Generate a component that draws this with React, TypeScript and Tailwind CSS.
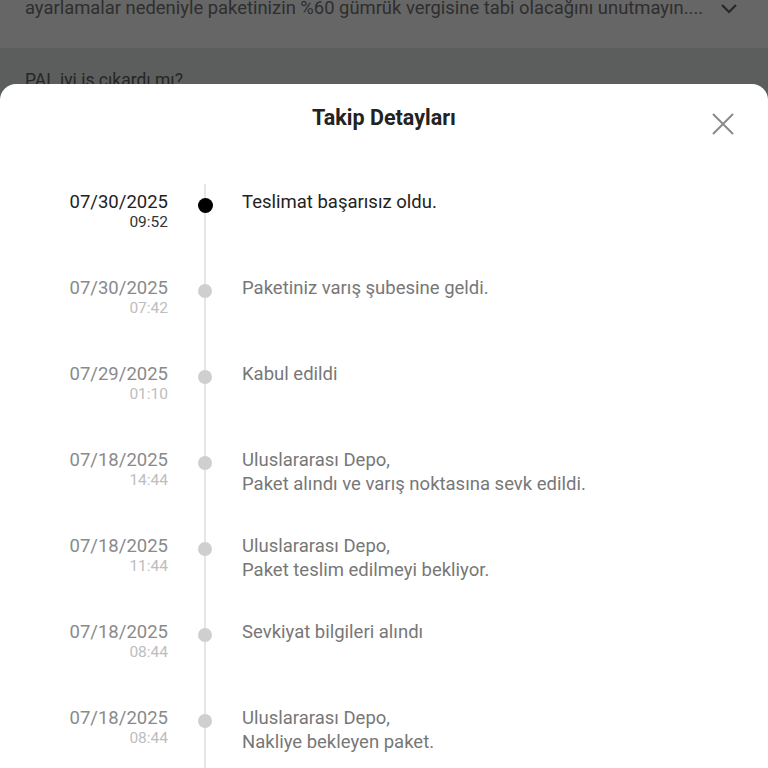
import React from "react";

type Item = { date: string; time: string; lines: string[]; active?: boolean };

const items: Item[] = [
  { date: "07/30/2025", time: "09:52", lines: ["Teslimat başarısız oldu."], active: true },
  { date: "07/30/2025", time: "07:42", lines: ["Paketiniz varış şubesine geldi."] },
  { date: "07/29/2025", time: "01:10", lines: ["Kabul edildi"] },
  { date: "07/18/2025", time: "14:44", lines: ["Uluslararası Depo,", "Paket alındı ve varış noktasına sevk edildi."] },
  { date: "07/18/2025", time: "11:44", lines: ["Uluslararası Depo,", "Paket teslim edilmeyi bekliyor."] },
  { date: "07/18/2025", time: "08:44", lines: ["Sevkiyat bilgileri alındı"] },
  { date: "07/18/2025", time: "08:44", lines: ["Uluslararası Depo,", "Nakliye bekleyen paket."] },
];

export default function App() {
  return (
    <div
      className="flex h-screen w-full flex-col overflow-hidden bg-[#5b5e5d]"
      style={{ fontFamily: "Roboto, 'Noto Sans', sans-serif" }}
    >
      {/* dimmed background page */}
      <div className="flex h-[48px] shrink-0 items-start justify-between overflow-hidden bg-[#666666] pl-[25px] pr-[30px]">
        <div className="-mt-[4px] truncate text-[18.4px] leading-[24px] text-[#2e2e2e]">
          ayarlamalar nedeniyle paketinizin %60 gümrük vergisine tabi olacağını unutmayın....
        </div>
        <svg width="18" height="12" viewBox="0 0 18 12" className="ml-[14px] mt-[3px] shrink-0" fill="none">
          <path d="M2 2 L9 9 L16 2" stroke="#262626" strokeWidth="2" />
        </svg>
      </div>
      <div className="h-[36px] shrink-0 overflow-hidden pl-[25px] pt-[20px]">
        <div className="text-[17.5px] leading-[24px] text-[#262626]">PAL iyi iş çıkardı mı?</div>
      </div>

      {/* bottom sheet */}
      <div className="flex flex-1 flex-col overflow-hidden rounded-t-[16px] bg-white">
        <div className="grid h-[100px] shrink-0 grid-cols-[1fr_auto_1fr] items-start pt-[20px]">
          <div />
          <div className="text-[21.5px] font-bold leading-[28px] text-[#222222]">Takip Detayları</div>
          <div className="flex justify-end pr-[34px]">
            <svg width="22" height="22" viewBox="0 0 22 22" className="mt-[9px]" fill="none">
              <path d="M1 1 L21 21 M21 1 L1 21" stroke="#8a8a8a" strokeWidth="2" />
            </svg>
          </div>
        </div>

        <div className="flex flex-col">
          {items.map((it, i) => (
            <div key={i} className="flex h-[86px] shrink-0">
              <div className="w-[168px] shrink-0 pt-[6px] text-right">
                <div
                  className={`text-[18.5px] leading-[24px] ${it.active ? "text-[#222222]" : "text-[#8a8a8a]"}`}
                >
                  {it.date}
                </div>
                <div
                  className={`text-[15.5px] leading-[16px] ${it.active ? "text-[#333333]" : "text-[#bdbdbd]"}`}
                >
                  {it.time}
                </div>
              </div>
              <div className="flex w-[74px] shrink-0 justify-center">
                <div className="flex w-[2px] justify-center bg-[#e6e6e6]">
                  {it.active ? (
                    <div className="mt-[14px] h-[15px] w-[15px] shrink-0 rounded-full bg-black" />
                  ) : (
                    <div className="mt-[14px] h-[14px] w-[14px] shrink-0 rounded-full bg-[#cfcfcf]" />
                  )}
                </div>
              </div>
              <div className="pt-[6px]">
                {it.lines.map((l, j) => (
                  <div
                    key={j}
                    className={`text-[18.5px] leading-[24px] ${it.active ? "text-[#222222]" : "text-[#777777]"}`}
                  >
                    {l}
                  </div>
                ))}
              </div>
            </div>
          ))}
        </div>
      </div>
    </div>
  );
}
